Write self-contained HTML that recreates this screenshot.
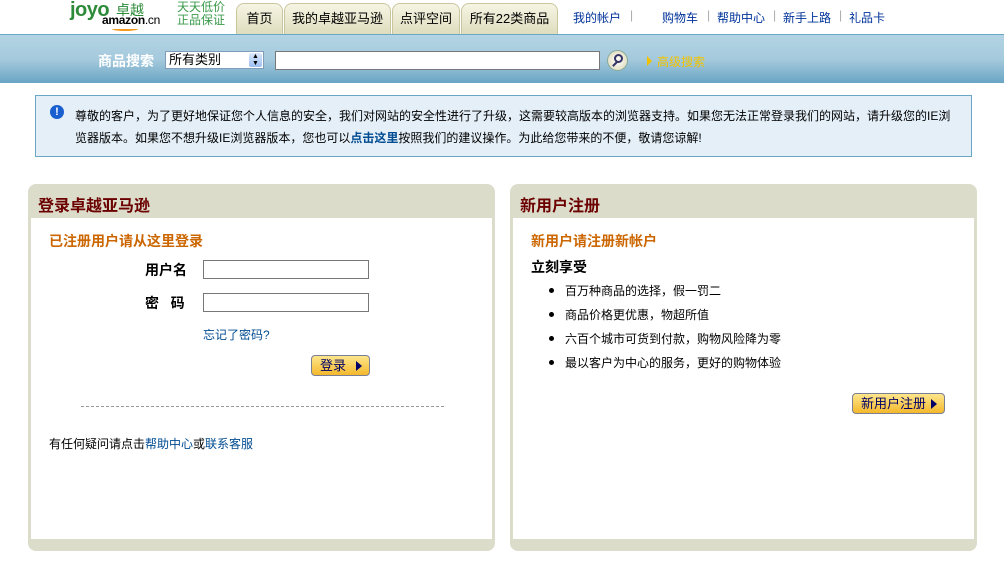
<!DOCTYPE html>
<html><head><meta charset="utf-8"><style>
*{margin:0;padding:0;box-sizing:border-box}
body{width:1004px;height:568px;background:#fff;font-family:"Liberation Sans","Noto Sans CJK SC","WenQuanYi Zen Hei",sans-serif;font-size:12px;color:#000;position:relative;overflow:hidden}
.a{position:absolute;white-space:nowrap}
.tab{position:absolute;top:3px;height:32px;border:1px solid #c9c69e;border-bottom:none;border-radius:8px 8px 0 0;background:linear-gradient(#f6f5e4,#dedcbc);font-size:13px;line-height:30px;text-align:center;color:#000}
.nav{color:#003399;font-size:12px;top:9px}
.sep{color:#aaa;top:8px}
.band{position:absolute;left:0;top:34px;width:1004px;height:49px;background:linear-gradient(#b3d4e4,#a5cadd 50%,#6aa5c5);border-top:1px solid #6aa6c6}
.panel{position:absolute;top:184px;width:467px;height:367px;background:#dcdccb;border-radius:8px}
.inner{position:absolute;left:3px;top:34px;width:461px;height:321px;background:#fff}
.ph{position:absolute;left:10px;top:8px;font-size:16px;font-weight:bold;color:#6b0000}
.sub{font-size:14px;font-weight:bold;color:#cc6600}
.inp{position:absolute;height:19px;border:1px solid #777;background:#fff}
.btn{position:absolute;height:21px;border:1px solid #7a7f95;border-radius:4px;background:linear-gradient(#fde68c,#f4b82c);font-size:13px;color:#000066;line-height:19px;padding-left:8px}
.btn i{position:absolute;right:7px;top:5px;width:0;height:0;border-left:6px solid #000066;border-top:5px solid transparent;border-bottom:5px solid transparent}
li{list-style:none;position:absolute;left:36px;font-size:12px}
li:before{content:"";position:absolute;left:-16px;top:6px;width:5px;height:5px;border-radius:50%;background:#000}
</style></head><body>
<!-- logo -->
<div class="a" style="left:70px;top:0px;font-size:20px;line-height:20px;font-weight:bold;color:#2e8b3a;letter-spacing:-0.5px">joyo</div>
<div class="a" style="left:116px;top:3px;font-size:14px;line-height:14px;color:#2e8b3a">卓越</div>
<div class="a" style="left:102px;top:14px;font-size:12px;line-height:13px;font-weight:bold;color:#000;letter-spacing:-0.3px">amazon<span style="font-weight:normal">.cn</span></div>
<div class="a" style="left:112px;top:27px;width:26px;height:4px;border-bottom:2px solid #f39a1d;border-radius:0 0 50% 50%"></div>
<div class="a" style="left:177px;top:1px;font-size:12px;line-height:13px;color:#3a9a4a">天天低价<br>正品保证</div>
<div class="tab" style="left:236px;width:47px">首页</div>
<div class="tab" style="left:284px;width:107px">我的卓越亚马逊</div>
<div class="tab" style="left:392px;width:68px">点评空间</div>
<div class="tab" style="left:461px;width:97px">所有22类商品</div>
<div class="a nav" style="left:573px">我的帐户</div><div class="a sep" style="left:630px">|</div>
<div class="a nav" style="left:662px">购物车</div><div class="a sep" style="left:707px">|</div>
<div class="a nav" style="left:717px">帮助中心</div><div class="a sep" style="left:773px">|</div>
<div class="a nav" style="left:783px">新手上路</div><div class="a sep" style="left:839px">|</div>
<div class="a nav" style="left:849px">礼品卡</div>
<div class="band"></div>
<div class="a" style="left:98px;top:51px;font-size:14px;font-weight:bold;color:#fff">商品搜索</div>
<div class="a" style="left:165px;top:51px;width:99px;height:18px;border:1px solid #7f9db9;background:#fff;font-size:13px;line-height:16px;padding-left:3px">所有类别<span style="position:absolute;right:1px;top:1px;width:13px;height:14px;background:linear-gradient(#dbe7fb,#9ebff0);border-radius:2px;font-size:7px;line-height:7px;text-align:center">▲<br>▼</span></div>
<div class="a" style="left:275px;top:51px;width:325px;height:19px;border:1px solid #777;background:#fff"></div>
<div class="a" style="left:607px;top:50px;width:21px;height:21px;border-radius:50%;background:radial-gradient(#fff,#d8d4b0);border:1px solid #8a9;"><div style="position:absolute;left:6px;top:3px;width:9px;height:9px;border:2px solid #336;border-radius:50%"></div><div style="position:absolute;left:4px;top:12px;width:6px;height:2px;background:#336;transform:rotate(-45deg)"></div></div>
<div class="a" style="left:647px;top:56px;width:0;height:0;border-left:5px solid #f2c200;border-top:5px solid transparent;border-bottom:5px solid transparent"></div>
<div class="a" style="left:657px;top:53px;font-size:12px;color:#f2c200">高级搜索</div>
<!-- notice -->
<div class="a" style="left:35px;top:95px;width:937px;height:62px;background:#e4eff8;border:1px solid #6aa6c6"></div>
<div class="a" style="left:50px;top:105px;width:14px;height:14px;border-radius:50%;background:#1a5fd0;color:#fff;font-size:11px;font-weight:bold;text-align:center;line-height:14px">!</div>
<div class="a" style="left:75px;top:105px;font-size:12px;line-height:22px;color:#000">尊敬的客户，为了更好地保证您个人信息的安全，我们对网站的安全性进行了升级，这需要较高版本的浏览器支持。如果您无法正常登录我们的网站，请升级您的IE浏<br>览器版本。如果您不想升级IE浏览器版本，您也可以<b style="color:#004b91">点击这里</b>按照我们的建议操作。为此给您带来的不便，敬请您谅解!</div>
<!-- left panel -->
<div class="panel" style="left:28px"><div class="ph">登录卓越亚马逊</div><div class="inner">
<div class="a sub" style="left:18px;top:13px">已注册用户请从这里登录</div>
<div class="a" style="left:114px;top:42px;font-size:14px;font-weight:bold">用户名</div>
<div class="inp" style="left:172px;top:42px;width:166px"></div>
<div class="a" style="left:114px;top:75px;font-size:14px;font-weight:bold">密&nbsp;&nbsp;&nbsp;码</div>
<div class="inp" style="left:172px;top:75px;width:166px"></div>
<div class="a" style="left:172px;top:108px;color:#004b91">忘记了密码?</div>
<div class="btn" style="left:280px;top:137px;width:59px">登录<i></i></div>
<div class="a" style="left:50px;top:188px;width:363px;border-top:1px dashed #999"></div>
<div class="a" style="left:18px;top:217px">有任何疑问请点击<span style="color:#004b91">帮助中心</span>或<span style="color:#004b91">联系客服</span></div>
</div></div>
<!-- right panel -->
<div class="panel" style="left:510px"><div class="ph">新用户注册</div><div class="inner">
<div class="a sub" style="left:18px;top:13px">新用户请注册新帐户</div>
<div class="a" style="left:18px;top:39px;font-size:14px;font-weight:bold">立刻享受</div>
<ul class="a" style="left:16px;top:64px"><li style="top:0">百万种商品的选择，假一罚二</li><li style="top:24px">商品价格更优惠，物超所值</li><li style="top:48px">六百个城市可货到付款，购物风险降为零</li><li style="top:72px">最以客户为中心的服务，更好的购物体验</li></ul>
<div class="btn" style="left:339px;top:175px;width:93px">新用户注册<i></i></div>
</div></div>
</body></html>
